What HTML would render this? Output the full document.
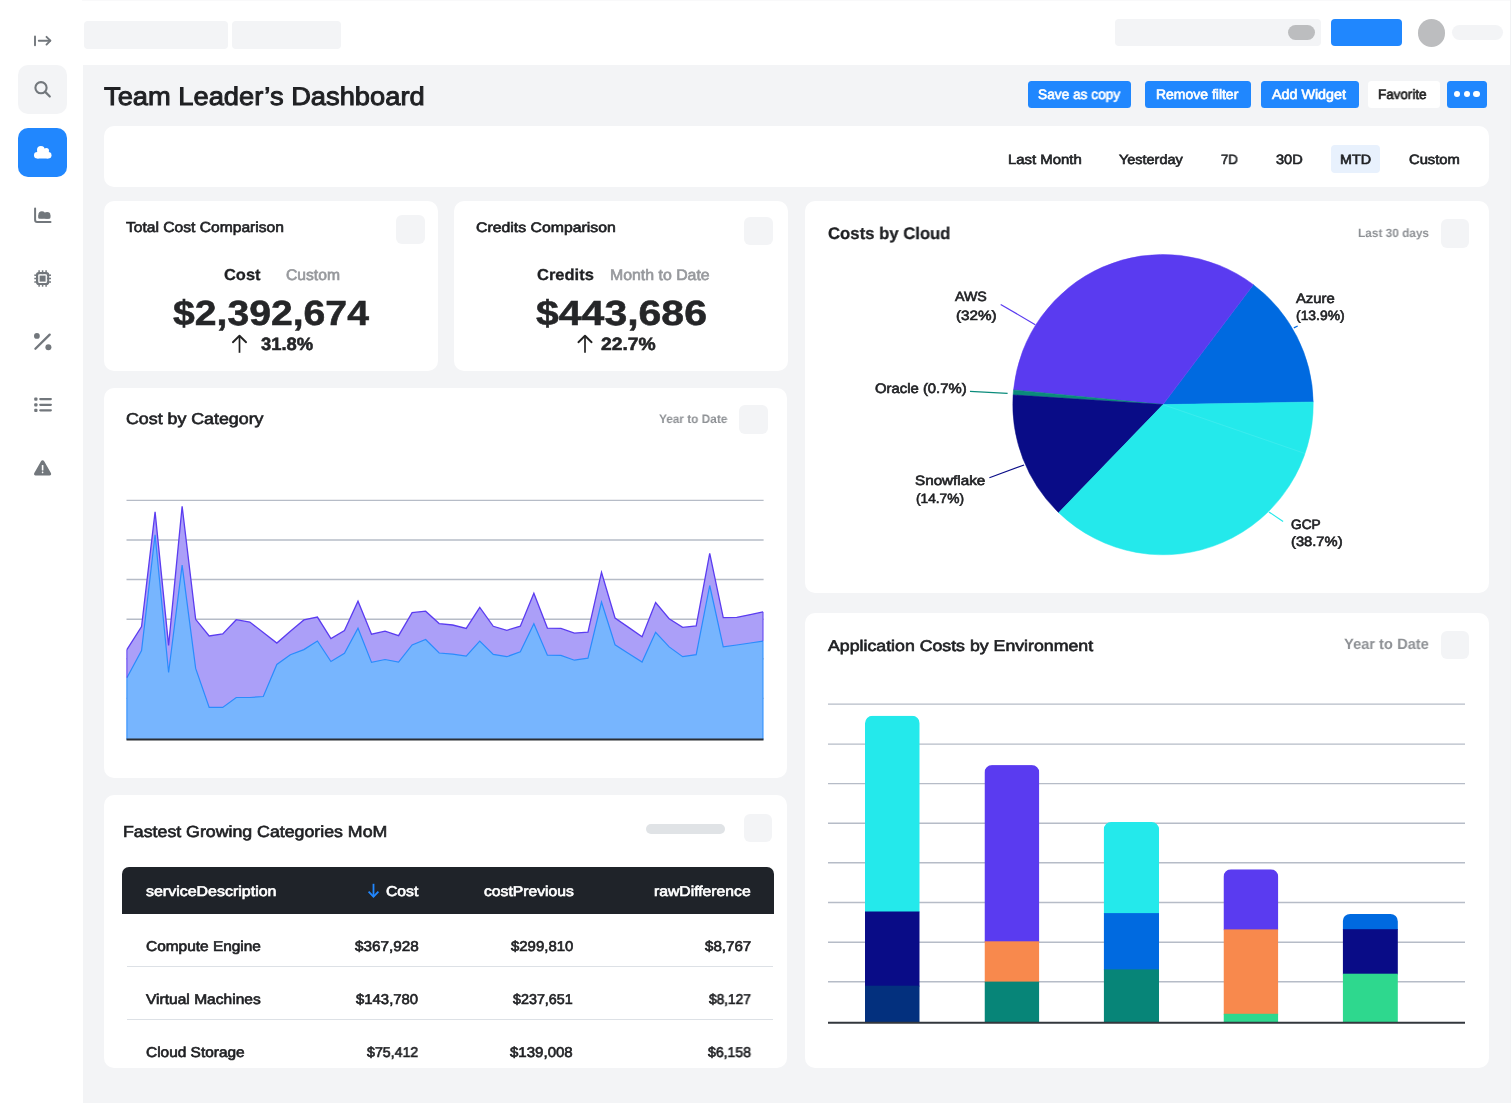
<!DOCTYPE html>
<html><head><meta charset="utf-8"><style>
html,body{margin:0;padding:0;}
body{width:1512px;height:1103px;overflow:hidden;position:relative;background:#fff;font-family:"Liberation Sans",sans-serif;}
.bx,.abs,.tx{position:absolute;}
.tx{white-space:nowrap;line-height:normal;transform-origin:0 0;will-change:transform;text-rendering:geometricPrecision;}
svg.abs{overflow:visible;}
</style></head><body>
<div class="bx" style="left:83px;top:0px;width:1427px;height:65px;background:#fff;border-radius:0px;"></div>
<div class="bx" style="left:82px;top:0px;width:1428px;height:1px;background:#f9f9fa;border-radius:0px;"></div>
<div class="bx" style="left:83px;top:65px;width:1427px;height:1038px;background:#f3f4f6;border-radius:0px;"></div>
<div class="bx" style="left:1510px;top:0px;width:1px;height:1103px;background:#f1f2f4;border-radius:0px;"></div>
<div class="bx" style="left:84px;top:20.5px;width:143.5px;height:28.700000000000003px;background:#f3f4f6;border-radius:4px;"></div>
<div class="bx" style="left:232px;top:20.5px;width:108.5px;height:28.700000000000003px;background:#f3f4f6;border-radius:4px;"></div>
<div class="bx" style="left:1115px;top:19px;width:206px;height:27px;background:#f3f4f6;border-radius:4px;"></div>
<div class="bx" style="left:1288px;top:25.3px;width:26.799999999999955px;height:14.7px;background:#bcbdbf;border-radius:8px;"></div>
<div class="bx" style="left:1331px;top:19px;width:71px;height:27.200000000000003px;background:#2087fe;border-radius:4px;"></div>
<div class="bx" style="left:1417.5px;top:19.2px;width:27.6px;height:27.6px;border-radius:50%;background:#bcbdbf"></div>
<div class="bx" style="left:1452.2px;top:25.2px;width:50.799999999999955px;height:14.8px;background:#f3f4f6;border-radius:8px;"></div>
<div class="bx" style="left:1028px;top:80.5px;width:103px;height:27.5px;background:#2087fe;border-radius:3.5px;"></div>
<div class="bx" style="left:1145px;top:80.5px;width:106px;height:27.5px;background:#2087fe;border-radius:3.5px;"></div>
<div class="bx" style="left:1261px;top:80.5px;width:98px;height:27.5px;background:#2087fe;border-radius:3.5px;"></div>
<div class="bx" style="left:1368px;top:80.5px;width:72px;height:27.5px;background:#ffffff;border-radius:3.5px;"></div>
<div class="bx" style="left:1446.7px;top:80.5px;width:40.5px;height:27.5px;background:#2087fe;border-radius:3.5px;"></div>
<div class="bx" style="left:1453.9px;top:90.5px;width:6.6px;height:6.6px;border-radius:50%;background:#fff"></div>
<div class="bx" style="left:1463.5px;top:90.5px;width:6.6px;height:6.6px;border-radius:50%;background:#fff"></div>
<div class="bx" style="left:1473.3px;top:90.5px;width:6.6px;height:6.6px;border-radius:50%;background:#fff"></div>
<div class="bx" style="left:104px;top:126px;width:1385px;height:60.599999999999994px;background:#fff;border-radius:10px;"></div>
<div class="bx" style="left:1331.3px;top:144.6px;width:48.90000000000009px;height:28.400000000000006px;background:#e8f1fd;border-radius:4px;"></div>
<div class="bx" style="left:104px;top:201px;width:334px;height:170px;background:#fff;border-radius:10px;"></div>
<div class="bx" style="left:454px;top:201px;width:334px;height:170px;background:#fff;border-radius:10px;"></div>
<div class="bx" style="left:396px;top:215px;width:29px;height:28.5px;background:#f3f4f6;border-radius:6px;"></div>
<div class="bx" style="left:744.3px;top:217.2px;width:28.300000000000068px;height:28.0px;background:#f3f4f6;border-radius:6px;"></div>
<div class="bx" style="left:104px;top:388px;width:683px;height:390px;background:#fff;border-radius:10px;"></div>
<div class="bx" style="left:739.2px;top:405px;width:28.399999999999977px;height:28.5px;background:#f3f4f6;border-radius:6px;"></div>
<div class="bx" style="left:104px;top:795px;width:683px;height:273.4000000000001px;background:#fff;border-radius:10px;"></div>
<div class="bx" style="left:646.4px;top:824.2px;width:78.39999999999998px;height:9.799999999999955px;background:#e0e3e6;border-radius:5px;"></div>
<div class="bx" style="left:743.5px;top:813.7px;width:28.5px;height:28.5px;background:#f3f4f6;border-radius:6px;"></div>
<div class="bx" style="left:805px;top:201px;width:684px;height:392px;background:#fff;border-radius:10px;"></div>
<div class="bx" style="left:1440.8px;top:219.2px;width:28.200000000000045px;height:28.5px;background:#f3f4f6;border-radius:6px;"></div>
<div class="bx" style="left:805px;top:613px;width:684px;height:455.4000000000001px;background:#fff;border-radius:10px;"></div>
<div class="bx" style="left:1441px;top:631.4px;width:28px;height:28.0px;background:#f3f4f6;border-radius:6px;"></div>
<div class="bx" style="left:122.2px;top:866.6px;width:651.5999999999999px;height:47.69999999999993px;background:#1f2329;border-radius:0px;border-radius:7px 7px 0 0;"></div>
<div class="bx" style="left:127px;top:965.8px;width:645.5px;height:1.2000000000000455px;background:#dde1e6;border-radius:0px;"></div>
<div class="bx" style="left:127px;top:1018.8px;width:645.5px;height:1.2000000000000455px;background:#dde1e6;border-radius:0px;"></div>
<svg class="abs" width="1512" height="1103" viewBox="0 0 1512 1103" style="left:0;top:0">
<line x1="239.5" y1="336.5" x2="239.5" y2="352.8" stroke="#222" stroke-width="1.7"/>
<polyline points="232.9,342.2 239.5,335.8 246.1,342.2" fill="none" stroke="#222" stroke-width="1.9" stroke-linecap="round" stroke-linejoin="round"/>
<line x1="585" y1="336.5" x2="585" y2="352.8" stroke="#222" stroke-width="1.7"/>
<polyline points="578.4,342.2 585,335.8 591.6,342.2" fill="none" stroke="#222" stroke-width="1.9" stroke-linecap="round" stroke-linejoin="round"/>
<line x1="373.5" y1="883.8" x2="373.5" y2="896.5" stroke="#2187fe" stroke-width="1.8"/>
<polyline points="368.6,891.6 373.5,896.6 378.4,891.6" fill="none" stroke="#2187fe" stroke-width="1.8"/>
</svg>
<svg class="abs" width="1512" height="1103" viewBox="0 0 1512 1103" style="left:0;top:0">
<line x1="126.5" y1="500.4" x2="763.6" y2="500.4" stroke="#b6bcc7" stroke-width="1.4"/><line x1="126.5" y1="540" x2="763.6" y2="540" stroke="#b6bcc7" stroke-width="1.4"/><line x1="126.5" y1="579.5" x2="763.6" y2="579.5" stroke="#b6bcc7" stroke-width="1.4"/><line x1="126.5" y1="619.2" x2="763.6" y2="619.2" stroke="#b6bcc7" stroke-width="1.4"/><line x1="126.5" y1="658.8" x2="763.6" y2="658.8" stroke="#b6bcc7" stroke-width="1.4"/><line x1="126.5" y1="698.4" x2="763.6" y2="698.4" stroke="#b6bcc7" stroke-width="1.4"/>
<polygon points="126.9,739.5 126.90,649.60 141.55,626.60 155.08,511.90 168.60,645.40 182.13,506.30 195.66,619.30 209.19,636.00 222.72,633.90 236.24,619.70 249.77,622.00 263.30,632.50 276.83,643.10 290.36,631.20 303.88,619.90 317.41,617.10 330.94,638.60 344.47,630.60 358.00,601.20 371.52,634.20 385.05,631.20 398.58,635.70 412.11,612.70 425.64,611.20 439.16,623.60 452.69,625.00 466.22,628.40 479.75,607.40 493.28,626.30 506.80,630.30 520.33,626.20 533.86,593.20 547.39,628.10 560.92,628.40 574.44,633.10 587.97,632.20 601.50,572.30 615.03,618.00 628.56,627.40 642.08,636.80 655.61,602.50 669.14,618.70 682.67,627.40 696.20,625.90 709.72,553.40 723.25,617.70 736.78,617.30 750.31,614.60 763.00,611.90 763.0,739.5" fill="#ab9ff8"/>
<polyline points="126.90,649.60 141.55,626.60 155.08,511.90 168.60,645.40 182.13,506.30 195.66,619.30 209.19,636.00 222.72,633.90 236.24,619.70 249.77,622.00 263.30,632.50 276.83,643.10 290.36,631.20 303.88,619.90 317.41,617.10 330.94,638.60 344.47,630.60 358.00,601.20 371.52,634.20 385.05,631.20 398.58,635.70 412.11,612.70 425.64,611.20 439.16,623.60 452.69,625.00 466.22,628.40 479.75,607.40 493.28,626.30 506.80,630.30 520.33,626.20 533.86,593.20 547.39,628.10 560.92,628.40 574.44,633.10 587.97,632.20 601.50,572.30 615.03,618.00 628.56,627.40 642.08,636.80 655.61,602.50 669.14,618.70 682.67,627.40 696.20,625.90 709.72,553.40 723.25,617.70 736.78,617.30 750.31,614.60 763.00,611.90" fill="none" stroke="#5b3cf0" stroke-width="1.3" stroke-linejoin="miter"/>
<polygon points="126.9,739.5 126.90,677.70 141.55,650.60 155.08,534.80 168.60,672.50 182.13,565.10 195.66,668.40 209.19,707.40 222.72,707.40 236.24,697.50 249.77,697.50 263.30,696.50 276.83,664.50 290.36,654.80 303.88,649.60 317.41,641.00 330.94,661.50 344.47,653.20 358.00,628.20 371.52,662.40 385.05,659.50 398.58,662.10 412.11,644.90 425.64,639.50 439.16,653.00 452.69,654.20 466.22,656.10 479.75,641.00 493.28,654.40 506.80,656.70 520.33,651.70 533.86,623.80 547.39,655.20 560.92,655.40 574.44,660.20 587.97,658.20 601.50,602.00 615.03,644.80 628.56,653.50 642.08,662.10 655.61,632.30 669.14,646.90 682.67,656.70 696.20,654.70 709.72,585.50 723.25,646.90 736.78,645.00 750.31,643.00 763.00,641.10 763.0,739.5" fill="#77b5fe"/>
<polyline points="126.90,677.70 141.55,650.60 155.08,534.80 168.60,672.50 182.13,565.10 195.66,668.40 209.19,707.40 222.72,707.40 236.24,697.50 249.77,697.50 263.30,696.50 276.83,664.50 290.36,654.80 303.88,649.60 317.41,641.00 330.94,661.50 344.47,653.20 358.00,628.20 371.52,662.40 385.05,659.50 398.58,662.10 412.11,644.90 425.64,639.50 439.16,653.00 452.69,654.20 466.22,656.10 479.75,641.00 493.28,654.40 506.80,656.70 520.33,651.70 533.86,623.80 547.39,655.20 560.92,655.40 574.44,660.20 587.97,658.20 601.50,602.00 615.03,644.80 628.56,653.50 642.08,662.10 655.61,632.30 669.14,646.90 682.67,656.70 696.20,654.70 709.72,585.50 723.25,646.90 736.78,645.00 750.31,643.00 763.00,641.10" fill="none" stroke="#2a8cfd" stroke-width="1.2"/>
<line x1="126.9" y1="649.6" x2="126.9" y2="677.7" stroke="#5b3cf0" stroke-width="1"/>
<line x1="763.0" y1="611.9" x2="763.0" y2="641.1" stroke="#5b3cf0" stroke-width="1"/>
<line x1="126.9" y1="677.7" x2="126.9" y2="739.5" stroke="#2a8cfd" stroke-width="1"/>
<line x1="763.0" y1="641.1" x2="763.0" y2="739.5" stroke="#2a8cfd" stroke-width="1"/>
<line x1="126.5" y1="739.5" x2="763.5" y2="739.5" stroke="#2b2e33" stroke-width="2"/>
</svg>
<svg class="abs" width="1512" height="1103" viewBox="0 0 1512 1103" style="left:0;top:0"><path d="M1163.0,404.6 L1313.18,401.98 A150.2,150.2 0 0 0 1253.39,284.64 Z" fill="#006ae0" stroke="#006ae0" stroke-width="0.5" stroke-linejoin="round"/><path d="M1163.0,404.6 L1253.39,284.64 A150.2,150.2 0 0 0 1013.52,389.94 Z" fill="#5a3bf0" stroke="#5a3bf0" stroke-width="0.5" stroke-linejoin="round"/><path d="M1163.0,404.6 L1013.52,389.94 A150.2,150.2 0 0 0 1013.11,394.91 Z" fill="#0a8b7b" stroke="#0a8b7b" stroke-width="0.5" stroke-linejoin="round"/><path d="M1163.0,404.6 L1013.11,394.91 A150.2,150.2 0 0 0 1058.66,512.64 Z" fill="#090c87" stroke="#090c87" stroke-width="0.5" stroke-linejoin="round"/><path d="M1163.0,404.6 L1058.66,512.64 A150.2,150.2 0 0 0 1313.18,401.98 Z" fill="#24e9eb" stroke="#24e9eb" stroke-width="0.5" stroke-linejoin="round"/><line x1="1163.0" y1="404.6" x2="1305.0" y2="453.5" stroke="#7ff3f4" stroke-width="0.5" opacity="0.5"/><line x1="1000.7" y1="304.4" x2="1035.3" y2="324.7" stroke="#5a3bf0" stroke-width="1.2"/><line x1="1293.8" y1="327.9" x2="1297.7" y2="326" stroke="#006ae0" stroke-width="1.2"/><line x1="970" y1="391.4" x2="1007.6" y2="393.3" stroke="#0a8b7b" stroke-width="1.2"/><line x1="989.4" y1="477.7" x2="1024.1" y2="465" stroke="#090c87" stroke-width="1.2"/><line x1="1268.9" y1="511.9" x2="1283.1" y2="521.5" stroke="#24e9eb" stroke-width="1.2"/></svg>
<svg class="abs" width="1512" height="1103" viewBox="0 0 1512 1103" style="left:0;top:0"><line x1="828" y1="704.1" x2="1465" y2="704.1" stroke="#b6bcc7" stroke-width="1.4"/><line x1="828" y1="744.1" x2="1465" y2="744.1" stroke="#b6bcc7" stroke-width="1.4"/><line x1="828" y1="783.6" x2="1465" y2="783.6" stroke="#b6bcc7" stroke-width="1.4"/><line x1="828" y1="823.3" x2="1465" y2="823.3" stroke="#b6bcc7" stroke-width="1.4"/><line x1="828" y1="862.7" x2="1465" y2="862.7" stroke="#b6bcc7" stroke-width="1.4"/><line x1="828" y1="902.5" x2="1465" y2="902.5" stroke="#b6bcc7" stroke-width="1.4"/><line x1="828" y1="942.2" x2="1465" y2="942.2" stroke="#b6bcc7" stroke-width="1.4"/><line x1="828" y1="981.8" x2="1465" y2="981.8" stroke="#b6bcc7" stroke-width="1.4"/><clipPath id="c865"><path d="M865.0,1022 L865.0,723.2 A7.5,7.5 0 0 1 872.5,715.7 L912.2,715.7 A7.5,7.5 0 0 1 919.7,723.2 L919.7,1022 Z"/></clipPath><g clip-path="url(#c865)"><rect x="865.0" y="715.7" width="54.70" height="196.60" fill="#24e9eb"/><rect x="865.0" y="911.5" width="54.70" height="75.00" fill="#090c87"/><rect x="865.0" y="985.7" width="54.70" height="37.10" fill="#03307e"/></g><clipPath id="c984"><path d="M984.5,1022 L984.5,772.6 A7.5,7.5 0 0 1 992.0,765.1 L1031.8,765.1 A7.5,7.5 0 0 1 1039.3,772.6 L1039.3,1022 Z"/></clipPath><g clip-path="url(#c984)"><rect x="984.5" y="765.1" width="54.80" height="177.00" fill="#5a3bf0"/><rect x="984.5" y="941.3" width="54.80" height="41.10" fill="#f8894d"/><rect x="984.5" y="981.6" width="54.80" height="41.20" fill="#078578"/></g><clipPath id="c1103"><path d="M1103.6999999999998,1022 L1103.6999999999998,829.5 A7.5,7.5 0 0 1 1111.1999999999998,822 L1151.6,822 A7.5,7.5 0 0 1 1159.1,829.5 L1159.1,1022 Z"/></clipPath><g clip-path="url(#c1103)"><rect x="1103.6999999999998" y="822" width="55.40" height="91.90" fill="#24e9eb"/><rect x="1103.6999999999998" y="913.1" width="55.40" height="57.10" fill="#006ae0"/><rect x="1103.6999999999998" y="969.4" width="55.40" height="53.40" fill="#078578"/></g><clipPath id="c1223"><path d="M1223.5,1022 L1223.5,876.8 A7.5,7.5 0 0 1 1231.0,869.3 L1270.8,869.3 A7.5,7.5 0 0 1 1278.3,876.8 L1278.3,1022 Z"/></clipPath><g clip-path="url(#c1223)"><rect x="1223.5" y="869.3" width="54.80" height="60.90" fill="#5a3bf0"/><rect x="1223.5" y="929.4" width="54.80" height="85.20" fill="#f8894d"/><rect x="1223.5" y="1013.8" width="54.80" height="9.00" fill="#2ed88e"/></g><clipPath id="c1342"><path d="M1342.6999999999998,1022 L1342.6999999999998,921.4 A7.5,7.5 0 0 1 1350.1999999999998,913.9 L1390.3999999999999,913.9 A7.5,7.5 0 0 1 1397.8999999999999,921.4 L1397.8999999999999,1022 Z"/></clipPath><g clip-path="url(#c1342)"><rect x="1342.6999999999998" y="913.9" width="55.20" height="16.10" fill="#006ae0"/><rect x="1342.6999999999998" y="929.2" width="55.20" height="45.30" fill="#090c87"/><rect x="1342.6999999999998" y="973.7" width="55.20" height="49.10" fill="#2ed88e"/></g><line x1="828" y1="1022.8" x2="1465" y2="1022.8" stroke="#33373d" stroke-width="2"/></svg>
<svg class="abs" width="83" height="500" viewBox="0 0 83 500" style="left:0;top:0"><line x1="35" y1="36.5" x2="35" y2="45.2" stroke="#72777c" stroke-width="1.9" stroke-linecap="round"/><line x1="38.8" y1="40.7" x2="50.2" y2="40.7" stroke="#72777c" stroke-width="1.9" stroke-linecap="round"/><polyline points="46.5,36.8 50.4,40.7 46.5,44.6" fill="none" stroke="#72777c" stroke-width="1.9" stroke-linecap="round" stroke-linejoin="round"/><rect x="18" y="65" width="49" height="49" rx="10" fill="#f3f4f6"/><circle cx="41" cy="87.7" r="5.6" fill="none" stroke="#72777c" stroke-width="2.1"/><line x1="45.2" y1="91.9" x2="49.8" y2="96.5" stroke="#72777c" stroke-width="2.2" stroke-linecap="round"/><rect x="18" y="128" width="49" height="49" rx="10" fill="#2187fe"/><g fill="#fff"><rect x="37.3" y="151.5" width="10.9" height="7"/><circle cx="37.3" cy="155.2" r="3.3"/><circle cx="48.2" cy="155.2" r="3.3"/><circle cx="40.9" cy="150" r="3.9"/><circle cx="46.3" cy="150.8" r="2.7"/></g><path d="M35.1,208.5 L35.1,219.9 Q35.1,221.9 37.1,221.9 L50.5,221.9" fill="none" stroke="#72777c" stroke-width="2" stroke-linecap="round" stroke-linejoin="round"/><g fill="#72777c"><circle cx="41.9" cy="214.7" r="3.5"/><circle cx="47.1" cy="215.4" r="3.3"/><rect x="38.2" y="214.7" width="12.2" height="4.1" rx="1.2"/></g><rect x="37" y="273" width="11.2" height="11" rx="1.8" fill="none" stroke="#72777c" stroke-width="2"/><rect x="39.6" y="275.5" width="6.2" height="6.2" fill="#72777c"/><line x1="39.1" y1="270.3" x2="39.1" y2="286.7" stroke="#72777c" stroke-width="1.5"/><line x1="42.6" y1="270.3" x2="42.6" y2="286.7" stroke="#72777c" stroke-width="1.5"/><line x1="46.1" y1="270.3" x2="46.1" y2="286.7" stroke="#72777c" stroke-width="1.5"/><line x1="34.3" y1="275.2" x2="51" y2="275.2" stroke="#72777c" stroke-width="1.5"/><line x1="34.3" y1="278.5" x2="51" y2="278.5" stroke="#72777c" stroke-width="1.5"/><line x1="34.3" y1="282" x2="51" y2="282" stroke="#72777c" stroke-width="1.5"/><rect x="38.3" y="274.3" width="8.6" height="8.6" rx="1" fill="#fff"/><rect x="39.6" y="275.6" width="6" height="6" fill="#72777c"/><circle cx="36.9" cy="335.9" r="2.9" fill="#72777c"/><circle cx="48.4" cy="347.3" r="3" fill="#72777c"/><line x1="35.4" y1="348.8" x2="49.7" y2="334.6" stroke="#72777c" stroke-width="2.3" stroke-linecap="round"/><rect x="34.2" y="397.6" width="3.3" height="3.1" rx="1" fill="#72777c"/><line x1="40.3" y1="399.1" x2="50.8" y2="399.1" stroke="#72777c" stroke-width="2.3" stroke-linecap="round"/><rect x="34.2" y="403.3" width="3.3" height="3.1" rx="1" fill="#72777c"/><line x1="40.3" y1="404.8" x2="50.8" y2="404.8" stroke="#72777c" stroke-width="2.3" stroke-linecap="round"/><rect x="34.2" y="408.8" width="3.3" height="3.1" rx="1" fill="#72777c"/><line x1="40.3" y1="410.3" x2="50.8" y2="410.3" stroke="#72777c" stroke-width="2.3" stroke-linecap="round"/><path d="M42.6,460.3 C43.3,460.3 43.8,460.7 44.2,461.3 L50.9,473 C51.6,474.2 50.9,475.4 49.6,475.4 L35.6,475.4 C34.3,475.4 33.6,474.2 34.3,473 L41,461.3 C41.4,460.7 41.9,460.3 42.6,460.3 Z" fill="#72777c"/><rect x="41.8" y="465" width="1.6" height="5.5" rx="0.6" fill="#fff"/><rect x="41.8" y="471.6" width="1.6" height="1.6" rx="0.6" fill="#fff"/></svg>
<div class="tx" style="left:104.40px;top:83px;font-size:25.50px;transform:scaleX(1.0704);font-weight:400;color:#1f2023;-webkit-text-stroke:0.95px #1f2023;">Team Leader’s Dashboard</div>
<div class="tx" style="left:1037.50px;top:87px;font-size:13.75px;transform:scaleX(0.9943);font-weight:400;color:#fff;-webkit-text-stroke:0.65px #fff;">Save as copy</div>
<div class="tx" style="left:1156.28px;top:87px;font-size:13.75px;transform:scaleX(1.0160);font-weight:400;color:#fff;-webkit-text-stroke:0.65px #fff;">Remove filter</div>
<div class="tx" style="left:1271.70px;top:87px;font-size:13.75px;transform:scaleX(1.0399);font-weight:400;color:#fff;-webkit-text-stroke:0.65px #fff;">Add Widget</div>
<div class="tx" style="left:1377.82px;top:87px;font-size:13.75px;transform:scaleX(0.9771);font-weight:400;color:#222;-webkit-text-stroke:0.65px #222;">Favorite</div>
<div class="tx" style="left:1007.50px;top:152px;font-size:13.50px;transform:scaleX(1.1045);font-weight:400;color:#1f2124;-webkit-text-stroke:0.65px #1f2124;">Last Month</div>
<div class="tx" style="left:1119.00px;top:152px;font-size:13.50px;transform:scaleX(1.0703);font-weight:400;color:#1f2124;-webkit-text-stroke:0.65px #1f2124;">Yesterday</div>
<div class="tx" style="left:1221.00px;top:152px;font-size:13.50px;transform:scaleX(0.9710);font-weight:400;color:#1f2124;-webkit-text-stroke:0.65px #1f2124;">7D</div>
<div class="tx" style="left:1276.00px;top:152px;font-size:13.50px;transform:scaleX(1.0793);font-weight:400;color:#1f2124;-webkit-text-stroke:0.65px #1f2124;">30D</div>
<div class="tx" style="left:1339.74px;top:152px;font-size:13.50px;transform:scaleX(1.0599);font-weight:400;color:#1f2124;-webkit-text-stroke:0.65px #1f2124;">MTD</div>
<div class="tx" style="left:1408.90px;top:152px;font-size:13.50px;transform:scaleX(1.0937);font-weight:400;color:#1f2124;-webkit-text-stroke:0.65px #1f2124;">Custom</div>
<div class="tx" style="left:126.40px;top:220px;font-size:14.50px;transform:scaleX(1.0770);font-weight:400;color:#1f2023;-webkit-text-stroke:0.65px #1f2023;">Total Cost Comparison</div>
<div class="tx" style="left:475.70px;top:220px;font-size:13.75px;transform:scaleX(1.1502);font-weight:400;color:#1f2023;-webkit-text-stroke:0.65px #1f2023;">Credits Comparison</div>
<div class="tx" style="left:224.30px;top:267px;font-size:15.75px;transform:scaleX(1.0432);font-weight:700;color:#1f2023;-webkit-text-stroke:0.3px #1f2023;">Cost</div>
<div class="tx" style="left:286.20px;top:267px;font-size:15.25px;transform:scaleX(1.0263);font-weight:400;color:#97999d;-webkit-text-stroke:0.65px #97999d;">Custom</div>
<div class="tx" style="left:172.70px;top:294px;font-size:35.00px;transform:scaleX(1.1183);font-weight:700;color:#252628;-webkit-text-stroke:0.55px #252628;">$2,392,674</div>
<div class="tx" style="left:260.80px;top:334px;font-size:17.75px;transform:scaleX(1.0367);font-weight:700;color:#252628;-webkit-text-stroke:0.55px #252628;">31.8%</div>
<div class="tx" style="left:536.70px;top:267px;font-size:15.75px;transform:scaleX(1.0476);font-weight:700;color:#1f2023;-webkit-text-stroke:0.3px #1f2023;">Credits</div>
<div class="tx" style="left:609.76px;top:267px;font-size:15.25px;transform:scaleX(1.0402);font-weight:400;color:#97999d;-webkit-text-stroke:0.65px #97999d;">Month to Date</div>
<div class="tx" style="left:535.60px;top:294px;font-size:35.00px;transform:scaleX(1.1710);font-weight:700;color:#252628;-webkit-text-stroke:0.55px #252628;">$443,686</div>
<div class="tx" style="left:601.00px;top:334px;font-size:17.75px;transform:scaleX(1.0881);font-weight:700;color:#252628;-webkit-text-stroke:0.55px #252628;">22.7%</div>
<div class="tx" style="left:126.00px;top:411px;font-size:15.75px;transform:scaleX(1.1297);font-weight:400;color:#1f2023;-webkit-text-stroke:0.65px #1f2023;">Cost by Category</div>
<div class="tx" style="left:658.80px;top:412px;font-size:12.25px;transform:scaleX(0.9649);font-weight:700;color:#8e9195;">Year to Date</div>
<div class="tx" style="left:827.70px;top:224px;font-size:16.75px;transform:scaleX(0.9967);font-weight:700;color:#1f2023;-webkit-text-stroke:0.3px #1f2023;">Costs by Cloud</div>
<div class="tx" style="left:1357.90px;top:226px;font-size:12.00px;transform:scaleX(0.9866);font-weight:700;color:#8e9195;">Last 30 days</div>
<div class="tx" style="left:955.30px;top:289px;font-size:13.50px;transform:scaleX(1.0514);font-weight:400;color:#1f2023;-webkit-text-stroke:0.65px #1f2023;">AWS</div>
<div class="tx" style="left:955.60px;top:308px;font-size:13.50px;transform:scaleX(1.1291);font-weight:400;color:#1f2023;-webkit-text-stroke:0.65px #1f2023;">(32%)</div>
<div class="tx" style="left:1295.60px;top:291px;font-size:13.75px;transform:scaleX(1.0752);font-weight:400;color:#1f2023;-webkit-text-stroke:0.65px #1f2023;">Azure</div>
<div class="tx" style="left:1295.90px;top:308px;font-size:13.50px;transform:scaleX(1.0305);font-weight:400;color:#1f2023;-webkit-text-stroke:0.65px #1f2023;">(13.9%)</div>
<div class="tx" style="left:874.80px;top:381px;font-size:13.75px;transform:scaleX(1.0803);font-weight:400;color:#1f2023;-webkit-text-stroke:0.65px #1f2023;">Oracle (0.7%)</div>
<div class="tx" style="left:915.30px;top:473px;font-size:13.50px;transform:scaleX(1.1282);font-weight:400;color:#1f2023;-webkit-text-stroke:0.65px #1f2023;">Snowflake</div>
<div class="tx" style="left:915.50px;top:491px;font-size:13.50px;transform:scaleX(1.0155);font-weight:400;color:#1f2023;-webkit-text-stroke:0.65px #1f2023;">(14.7%)</div>
<div class="tx" style="left:1291.10px;top:517px;font-size:13.50px;transform:scaleX(1.0154);font-weight:400;color:#1f2023;-webkit-text-stroke:0.65px #1f2023;">GCP</div>
<div class="tx" style="left:1291.30px;top:534px;font-size:13.50px;transform:scaleX(1.0903);font-weight:400;color:#1f2023;-webkit-text-stroke:0.65px #1f2023;">(38.7%)</div>
<div class="tx" style="left:827.90px;top:638px;font-size:15.50px;transform:scaleX(1.1439);font-weight:400;color:#1f2023;-webkit-text-stroke:0.65px #1f2023;">Application Costs by Environment</div>
<div class="tx" style="left:1344.30px;top:636px;font-size:15.00px;transform:scaleX(0.9796);font-weight:700;color:#8e9195;">Year to Date</div>
<div class="tx" style="left:122.69px;top:824px;font-size:16.00px;transform:scaleX(1.1090);font-weight:400;color:#1f2023;-webkit-text-stroke:0.65px #1f2023;">Fastest Growing Categories MoM</div>
<div class="tx" style="left:145.50px;top:884px;font-size:14.25px;transform:scaleX(1.1205);font-weight:400;color:#fff;-webkit-text-stroke:0.65px #fff;">serviceDescription</div>
<div class="tx" style="left:386.40px;top:884px;font-size:14.25px;transform:scaleX(1.1043);font-weight:400;color:#fff;-webkit-text-stroke:0.65px #fff;">Cost</div>
<div class="tx" style="left:483.70px;top:884px;font-size:14.25px;transform:scaleX(1.1001);font-weight:400;color:#fff;-webkit-text-stroke:0.65px #fff;">costPrevious</div>
<div class="tx" style="left:654.30px;top:884px;font-size:14.25px;transform:scaleX(1.1023);font-weight:400;color:#fff;-webkit-text-stroke:0.65px #fff;">rawDifference</div>
<div class="tx" style="left:146.40px;top:939px;font-size:14.25px;transform:scaleX(1.0826);font-weight:400;color:#1f2023;-webkit-text-stroke:0.65px #1f2023;">Compute Engine</div>
<div class="tx" style="left:354.80px;top:939px;font-size:14.25px;transform:scaleX(1.0721);font-weight:400;color:#1f2023;-webkit-text-stroke:0.65px #1f2023;">$367,928</div>
<div class="tx" style="left:510.60px;top:939px;font-size:14.25px;transform:scaleX(1.0486);font-weight:400;color:#1f2023;-webkit-text-stroke:0.65px #1f2023;">$299,810</div>
<div class="tx" style="left:704.50px;top:939px;font-size:14.25px;transform:scaleX(1.0605);font-weight:400;color:#1f2023;-webkit-text-stroke:0.65px #1f2023;">$8,767</div>
<div class="tx" style="left:146.40px;top:992px;font-size:14.25px;transform:scaleX(1.0919);font-weight:400;color:#1f2023;-webkit-text-stroke:0.65px #1f2023;">Virtual Machines</div>
<div class="tx" style="left:356.40px;top:992px;font-size:14.25px;transform:scaleX(1.0452);font-weight:400;color:#1f2023;-webkit-text-stroke:0.65px #1f2023;">$143,780</div>
<div class="tx" style="left:513.20px;top:992px;font-size:14.25px;transform:scaleX(1.0049);font-weight:400;color:#1f2023;-webkit-text-stroke:0.65px #1f2023;">$237,651</div>
<div class="tx" style="left:708.90px;top:992px;font-size:14.25px;transform:scaleX(0.9597);font-weight:400;color:#1f2023;-webkit-text-stroke:0.65px #1f2023;">$8,127</div>
<div class="tx" style="left:146.40px;top:1045px;font-size:14.25px;transform:scaleX(1.0825);font-weight:400;color:#1f2023;-webkit-text-stroke:0.65px #1f2023;">Cloud Storage</div>
<div class="tx" style="left:367.30px;top:1045px;font-size:14.25px;transform:scaleX(0.9945);font-weight:400;color:#1f2023;-webkit-text-stroke:0.65px #1f2023;">$75,412</div>
<div class="tx" style="left:510.20px;top:1045px;font-size:14.25px;transform:scaleX(1.0553);font-weight:400;color:#1f2023;-webkit-text-stroke:0.65px #1f2023;">$139,008</div>
<div class="tx" style="left:707.80px;top:1045px;font-size:14.25px;transform:scaleX(0.9849);font-weight:400;color:#1f2023;-webkit-text-stroke:0.65px #1f2023;">$6,158</div>
</body></html>
